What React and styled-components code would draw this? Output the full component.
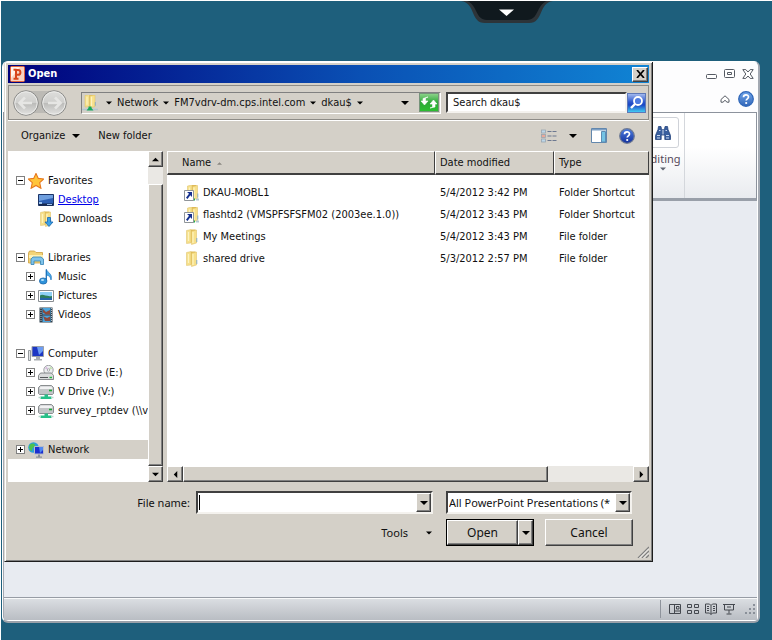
import { useId } from 'react';
import styled, { createGlobalStyle, css } from 'styled-components';

const face = '#d4d0c8';
const tahoma = "'DejaVu Sans Condensed', 'DejaVu Sans', sans-serif";
const segoe = "'Noto Sans', 'Open Sans', sans-serif";

const GlobalStyle = createGlobalStyle`
  * {
    box-sizing: border-box;
  }

  body {
    margin: 0;
    background: #1e5f7c;
    color: #111;
    font-family: ${tahoma};
    font-size: 11px;
    line-height: 14px;
  }

  button, input, select {
    font: inherit;
    color: inherit;
    margin: 0;
    padding: 0;
    border-radius: 0;
    outline: none;
  }

  svg {
    display: block;
    flex: none;
  }
`;

const raised = css`
  border: 1px solid;
  border-color: #fff #404040 #404040 #fff;
  box-shadow: inset -1px -1px 0 #808080;
  background: ${face};
`;

const sunken = css`
  border: 2px solid;
  border-color: #404040 #f4f2ee #f4f2ee #404040;
  background: #fff;
`;

const Desktop = styled.main`
  display: flex;
  flex-direction: column;
  min-height: 100vh;
  padding: 0 12px 17px 1px;
  border-top: 1px solid #fff;
  border-left: 1px solid #fff;
  background: #1e5f7c;
`;

const TopBar = styled.header`
  height: 60px;
  padding-left: 459px;
`;

const PlainButton = styled.button`
  display: flex;
  align-items: center;
  justify-content: center;
  flex: none;
  border: 0;
  background: none;
`;

const AppWindow = styled.section`
  position: relative;
  display: flex;
  flex-direction: column;
  flex: 1;
  border: 1px solid #fff;
  border-right: 2px solid #a3a9b2;
  border-bottom: 2px solid #9ba1aa;
  border-radius: 6px;
  background: #e8ebf1;
  box-shadow: inset 1px 0 0 #a5a9b2, inset -1px -1px 0 #fff;
  overflow: hidden;
`;

const AppTitle = styled.div`
  display: flex;
  justify-content: flex-end;
  align-items: center;
  gap: 7px;
  height: 24px;
  padding-right: 4px;
  background: #fdfdfe;
`;

const AppTabs = styled(AppTitle)`
  gap: 8px;
  height: 26px;
`;

const Ribbon = styled.div`
  display: flex;
  justify-content: flex-end;
  height: 89px;
  margin-right: 1px;
  padding-right: 71px;
  border: 1px solid #8d939d;
  border-bottom: 3px solid #999fa9;
  background: linear-gradient(#fff 40%, #e9ebef);
`;

const RibbonGroup = styled.div`
  display: flex;
  flex-direction: column;
  align-items: center;
  width: 44px;
  padding-top: 4px;
  border-right: 1px solid #d4d7dc;
  color: #55495a;
  font-family: ${segoe};
  font-size: 11px;
  line-height: 14px;
`;

const RibbonTile = styled.button`
  display: flex;
  align-items: center;
  justify-content: center;
  width: 32px;
  height: 31px;
  margin-bottom: 4px;
  border: 1px solid #cfd2d8;
  border-radius: 3px;
  background: #fff;
`;

const AppBody = styled.div`
  flex: 1;
`;

const StatusBar = styled.footer`
  display: flex;
  justify-content: flex-end;
  align-items: center;
  gap: 6px;
  height: 23px;
  margin: 0 1px 1px;
  padding-right: 1px;
  border-top: 1px solid #979ca5;
  box-shadow: inset 0 1px 0 #f8f9fa;
  background: linear-gradient(#dcdfe3, #b9bdc3);
`;

const StatusDivider = styled.span`
  width: 1px;
  height: 18px;
  margin-right: 2px;
  background: #8f949c;
`;

const StatusViews = styled.div`
  display: flex;
  gap: 6px;
  margin-right: 3px;
`;

const Dialog = styled.form`
  position: absolute;
  top: -1px;
  left: 1px;
  right: 105px;
  padding: 3px;
  border: 1px solid;
  border-color: #dedbd5 #1d1d1d #1d1d1d #dedbd5;
  box-shadow: inset 1px 1px 0 #fff, inset -1px -1px 0 #808080;
  background: ${face};
`;

const DialogTitle = styled.div`
  display: flex;
  align-items: center;
  gap: 3px;
  height: 18px;
  padding: 0 1px 0 2px;
  background: linear-gradient(90deg, #00007c, #0a50b4 55%, #1084d4);
  color: #fff;
`;

const TitleText = styled.h1`
  flex: 1;
  margin: 0;
  font-size: 11px;
  line-height: 14px;
`;

const CloseButton = styled.button`
  ${raised}
  display: flex;
  align-items: center;
  justify-content: center;
  width: 16px;
  height: 15px;
`;

const AddressRow = styled.div`
  display: flex;
  align-items: center;
  height: 35px;
  margin-top: 2px;
  padding: 0 2px 0 4px;
  border: 1px solid #8e8c87;
  box-shadow: 0 1px 0 #fff;
`;

const AddressBox = styled.nav`
  display: flex;
  align-items: center;
  flex: 1;
  height: 22px;
  margin: 0 5px 0 14px;
  padding: 0 1px 0 0;
  border: 1px solid;
  border-color: #808080 #fff #fff #808080;
`;

const Crumb = styled.button`
  display: flex;
  align-items: center;
  gap: 5px;
  padding: 0 0 0 5px;
  border: 0;
  background: none;
  white-space: nowrap;
`;

const FirstCrumb = styled(Crumb)`
  padding-left: 8px;
`;

const Spacer = styled.span`
  flex: ${props => (props.$width ? `0 0 ${props.$width}px` : 1)};
`;

const SearchInput = styled.input`
  ${sunken}
  width: 181px;
  height: 21px;
  padding: 0 5px;
`;

const Toolbar = styled.div`
  display: flex;
  align-items: center;
  height: 31px;
  padding: 0 14px 0 13px;
`;

const ToolButton = styled.button`
  display: flex;
  align-items: center;
  gap: 7px;
  margin-right: ${props => props.$gap}px;
  padding: 0;
  border: 0;
  background: none;
  white-space: nowrap;
`;

const Panes = styled.div`
  display: flex;
  gap: 4px;
  height: 331px;
`;

const TreePane = styled.div`
  display: flex;
  width: 155px;
  background: #fff;
`;

const Tree = styled.ul`
  flex: 1;
  min-width: 0;
  margin: 0;
  padding: 20px 0 0;
  list-style: none;
  overflow: hidden;
`;

const TreeGroup = styled.li`
  margin-bottom: 20px;
`;

const Branch = styled.ul`
  margin: 0;
  padding: 0;
  list-style: none;
`;

const TreeRow = styled.div`
  display: flex;
  align-items: center;
  gap: 3px;
  height: 19px;
  padding-left: ${props => (props.$child ? 18 : 8)}px;
  background: ${props => (props.$selected ? face : 'transparent')};
  white-space: nowrap;
`;

const TreeLink = styled.a`
  margin-left: 1px;
  color: ${props => (props.$active ? '#0000e8' : 'inherit')};
  text-decoration: ${props => (props.$active ? 'underline' : 'none')};
`;

const Toggle = styled.button`
  display: flex;
  flex: none;
  width: 9px;
  height: 9px;
  border: 1px solid #808080;
  background: #fff;
`;

const TogglePlace = styled.span`
  flex: none;
  width: 9px;
`;

const ScrollBar = styled.div`
  display: flex;
  flex: none;
  flex-direction: ${props => (props.$vertical ? 'column' : 'row')};
  ${props => (props.$vertical ? 'width: 15px;' : 'height: 16px;')}
  background: #eae8e4;
`;

const ScrollButton = styled.button`
  ${raised}
  display: flex;
  align-items: center;
  justify-content: center;
  flex: none;
  width: ${props => (props.$wide ? 16 : 15)}px;
  height: 16px;
`;

const ScrollThumb = styled.div`
  ${raised}
  flex: ${props => props.$size};
`;

const ScrollGap = styled.div`
  flex: ${props => props.$size};
`;

const ListPane = styled.div`
  display: flex;
  flex-direction: column;
  flex: 1;
  min-width: 0;
  background: #fff;
`;

const ListArea = styled.div`
  flex: 1;
`;

const FileTable = styled.table`
  width: 100%;
  border-collapse: separate;
  border-spacing: 0;
  table-layout: fixed;
`;

const HeadCell = styled.th`
  height: 24px;
  padding: 1px 0 0 ${props => props.$inset}px;
  border: 1px solid;
  border-color: #fff #404040 #404040 #fff;
  border-bottom-width: 2px;
  background: ${face};
  font-weight: normal;
  text-align: left;
`;

const HeadLabel = styled.span`
  display: flex;
  align-items: center;
  gap: 6px;
`;

const FileRows = styled.tbody`
  td {
    height: 22px;
    padding: 0 0 0 5px;
    white-space: nowrap;
  }

  &::before {
    content: '';
    display: table-row;
    height: 7px;
  }
`;

const FileName = styled.span`
  display: flex;
  align-items: center;
  gap: 3px;
  padding-left: 12px;
`;

const Footer = styled.div`
  display: grid;
  grid-template-columns: 1fr 237px 186px;
  column-gap: 13px;
  row-gap: 5px;
  align-items: center;
  padding: 9px 17px 8px 0;
  font-family: ${segoe};
  font-size: 11px;
  line-height: 16px;
`;

const FieldLabel = styled.label`
  margin-right: -7px;
  text-align: right;
`;

const Combo = styled.div`
  ${sunken}
  display: flex;
  height: 23px;
`;

const FileInput = styled.input`
  flex: 1;
  min-width: 0;
  padding: 0 3px;
  border: 0;
  background: linear-gradient(#000, #000) 1px 2px / 1px 15px no-repeat #fff;
`;

const TypeSelect = styled.select`
  flex: 1;
  min-width: 0;
  padding: 0 1px;
  border: 0;
  background: #fff;
  appearance: none;
`;

const Drop = styled.button`
  ${raised}
  display: flex;
  align-items: center;
  justify-content: center;
  flex: none;
  width: 15px;
`;

const ToolsCell = styled.div`
  display: flex;
  justify-content: flex-end;
  grid-column: 1 / 3;
`;

const Actions = styled.div`
  display: flex;
  justify-content: space-between;
  margin-right: -1px;
  font-size: 12px;
`;

const SplitButton = styled.div`
  display: flex;
  width: 88px;
  height: 27px;
  border: 1px solid #000;
`;

const PushButton = styled.button`
  ${raised}
  width: ${props => props.$width};
  height: ${props => props.$height};
`;

const GripCorner = styled.div`
  display: flex;
  justify-content: flex-end;
  height: 12px;
  margin-top: -8px;
`;

const Arrow = ({ size = 7, dir = 'down', color = '#000' }) => {
  const turn = { down: 0, left: 90, up: 180, right: 270 }[dir];
  return (
    <svg width={size} height={size} viewBox="0 0 8 8" aria-hidden="true">
      <path d="M0 2h8L4 6z" fill={color} transform={`rotate(${turn} 4 4)`} />
    </svg>
  );
};

const FolderShape = () => (
  <>
    <path d="M2.500 1.500L7 .5v13.500l-4.500.5z" fill="#f6e08c" stroke="#dcbf62" strokeWidth=".5" />
    <path d="M7 .5h4.500v13H7z" fill="#dfbb58" />
    <path d="M7.500 2l5-1v13l-5 1.500z" fill="#f7e08a" stroke="#dcbb5a" strokeWidth=".5" />
    <path d="M9 3v11M4.500 3v9" stroke="#fdf3c0" strokeWidth="1.200" />
    <path d="M12.800 9v4" stroke="#6fa2cf" strokeWidth=".8" />
  </>
);

const icons = {
  star: (
    <path
      d="M8 .4l2.300 5 5.500.6-4.100 3.700 1.200 5.600L8 12.500 3.100 15.300l1.200-5.600L.2 6l5.500-.6z"
      fill="#ffc53a"
      stroke="#e8791e"
      strokeWidth="1.100"
    />
  ),
  desktop: (
    <>
      <path d="M.5 2.500h15v11H.5z" fill="#2c5fb4" stroke="#1c3467" />
      <path d="M1 3h14v3L1 9z" fill="#6e9ede" />
      <path d="M1 11.500h14v2H1z" fill="#17284e" />
      <path d="M1 10h3v2H1zM9 12h5v1H9z" fill="#9cc3ee" />
    </>
  ),
  downloads: (
    <>
      <FolderShape />
      <path d="M9.500 6.500h3V11H15l-4 4.500L7 11h2.500z" fill="#3aa0e6" stroke="#1766ae" strokeWidth=".8" />
    </>
  ),
  libraries: (
    <>
      <path d="M.5 3l1-2h5L8 2.500h6.500V13H.5z" fill="#f3d477" stroke="#cda03f" strokeWidth=".8" />
      <path d="M1 5h14v3H1z" fill="#fdf0b4" />
      <path d="M3 14.500V9l2-2h8l2.500 2v5.500h-3V11H6v3.500z" fill="#7fc3ea" stroke="#3283b8" strokeWidth=".8" />
    </>
  ),
  music: (
    <>
      <path d="M8.500.5c.5 3 6.500 4 4.500 10.500-.3-3-2-4.500-4.500-5z" fill="#4aabea" stroke="#1d73bb" strokeWidth=".7" />
      <path d="M8.300.5v11.500" stroke="#1d73bb" strokeWidth="1.300" />
      <ellipse cx="5.200" cy="12" rx="3.800" ry="3.100" fill="#2f93da" stroke="#1a62a5" strokeWidth=".7" />
      <ellipse cx="4.500" cy="11" rx="1.600" ry="1" fill="#b6e2fb" />
    </>
  ),
  pictures: (
    <>
      <path d="M.5 2.500h15v11H.5z" fill="#fff" stroke="#8a8e92" />
      <path d="M2 4h12v8H2z" fill="#8fd0f5" />
      <path d="M2 7.500c3-2 6 1.500 12 .5v4H2z" fill="#2d7d5b" />
      <path d="M2 10c4-1 8 1 12-.5V12H2z" fill="#2664a8" />
    </>
  ),
  videos: (
    <>
      <path d="M1.500.5h13v15h-13z" fill="#31404d" />
      <path d="M4.500 1h8v6.500h-8zM4.500 8.500h8V15h-8z" fill="#4ba4dc" />
      <path d="M5 2l3 3 4-2v4.500H8l-3-2zM5 9l4 2 3-1.500v4.500H7z" fill="#8e4b3c" />
      <path d="M3 1v14M13.500 1v14" stroke="#b6c0c8" strokeDasharray="1 1" />
    </>
  ),
  computer: (
    <>
      <path d="M.5 4.500h2v10h-2z" fill="#e2e4e6" stroke="#7f8488" strokeWidth=".8" />
      <path d="M4 .5h11.500v10H4z" fill="#1d37c4" stroke="#9ba0a8" />
      <path d="M9 1h6v4l-4 4z" fill="#6c9cf4" />
      <path d="M8 11h4v2h2v1.500H6V13h2z" fill="#a9adb2" />
    </>
  ),
  cd: (
    <>
      <circle cx="10.500" cy="5" r="4.700" fill="#eceef0" stroke="#8a8e92" strokeWidth=".8" />
      <path d="M10.500 5l2-3.500 2 2z" fill="#c6e3b1" />
      <path d="M10.500 5L7 3.500 8.500 1.500z" fill="#d8b9dd" />
      <circle cx="10.500" cy="5" r="1.200" fill="#fff" stroke="#7d8184" strokeWidth=".6" />
      <path d="M2.500 8h11l2 2.500v4H.5v-4z" fill="#d9dbdc" stroke="#6d7173" strokeWidth=".8" />
      <path d="M2 12.500h8" stroke="#55595c" />
      <path d="M11.500 12.500h2.500" stroke="#23b43c" strokeWidth="1.400" />
    </>
  ),
  netdrive: (
    <>
      <path d="M2.500 1.500h11l2 2v6l-1 1h-13l-1-1v-6z" fill="#c2c5c7" stroke="#74787b" strokeWidth=".8" />
      <path d="M2.500 2.500h11l1 2.500h-13z" fill="#f1f2f3" />
      <path d="M11 6.500h3" stroke="#1ba634" strokeWidth="1.600" />
      <path d="M6.500 10.500h3.500v2h3.500v2.500h-11v-2.500h4z" fill="#27c088" />
      <path d="M.5 13.500H3M13 13.500h2.500" stroke="#b9d8cc" strokeWidth="1.500" />
    </>
  ),
  network: (
    <>
      <circle cx="5.500" cy="5.500" r="5.300" fill="#2aa1d8" />
      <path d="M2 2.500c3-2 5-1 5 1S4 5 4 8 1 7 1 5z" fill="#4dc24d" />
      <path d="M6.500 4.500h9v7.500h-9z" fill="#1c2fd0" stroke="#b7bcc8" />
      <path d="M11 5h4v3l-3 3z" fill="#4e86f0" />
      <path d="M10 12.500h2v2h2v1.200H8v-1.200h2z" fill="#8c919a" />
    </>
  ),
  folder: <FolderShape />,
  shortcut: (
    <>
      <g transform="translate(1 -.5)">
        <FolderShape />
      </g>
      <path d="M9 14.500h2" stroke="#15b04b" strokeWidth="2" />
      <path d="M12 14.500h3" stroke="#b3c7d5" strokeWidth="2" />
      <path d="M.5 5.500h9v10h-9z" fill="#fff" stroke="#8f9499" />
      <path d="M3 7h5v5L6.300 10.300 3.500 14 2 12.700l3-3.900z" fill="#15308f" />
    </>
  ),
  share: (
    <>
      <g transform="translate(.5 -1) scale(1 .9)">
        <FolderShape />
      </g>
      <path d="M0 14.500h16" stroke="#b4c6cf" strokeWidth="1.600" />
      <path d="M6.500 11.500h3v1.500l2 2.500h-7l2-2.500z" fill="#16a85c" />
    </>
  ),
};

const Icon = ({ name, size = 16 }) => (
  <svg width={size} height={size} viewBox="0 0 16 16" aria-hidden="true">
    {icons[name]}
  </svg>
);

const HelpIcon = ({ rim = '#2f66b8', from = '#6fa5ea', to = '#3266b8' }) => {
  const id = useId();
  return (
    <svg width="16" height="16" viewBox="0 0 16 16" aria-hidden="true">
      <linearGradient id={id} x2="0" y2="1">
        <stop stopColor={from} />
        <stop offset="1" stopColor={to} />
      </linearGradient>
      <circle cx="8" cy="8" r="7.300" fill={`url(#${id})`} stroke={rim} strokeWidth="1.200" />
      <path
        d="M5.500 6.300c0-3.200 5-3.200 5-.2 0 1.700-2.300 1.800-2.300 3.500"
        fill="none"
        stroke="#fff"
        strokeWidth="1.700"
      />
      <circle cx="8.200" cy="12" r="1.100" fill="#fff" />
    </svg>
  );
};

const PowerPointIcon = () => (
  <svg width="15" height="16" viewBox="0 0 15 16" aria-hidden="true">
    <rect x=".5" y=".5" width="14" height="15" rx="1" fill="#f8d3c2" stroke="#e2623a" />
    <path d="M1 1h9L1 12z" fill="#fff3ec" />
    <path
      d="M6 13V4h2a2.300 2.300 0 010 4.800H6M3.500 12.800h5M3.500 3.800h3"
      fill="none"
      stroke="#d6451b"
      strokeWidth="2"
    />
  </svg>
);

const NavArrows = () => (
  <svg width="54" height="28" viewBox="0 0 54 28" aria-hidden="true">
    <linearGradient id="navFace" x2="0" y2="1">
      <stop stopColor="#dededc" />
      <stop offset=".48" stopColor="#cfcfcd" />
      <stop offset=".52" stopColor="#bcbcba" />
      <stop offset="1" stopColor="#e4e4e2" />
    </linearGradient>
    <path d="M13 2h28v22H13z" fill="#bcbab5" />
    {[13, 41].map(x => (
      <g key={x}>
        <circle cx={x} cy="14" r="12.300" fill="url(#navFace)" stroke="#8b8b89" />
        <circle cx={x} cy="14" r="11.200" fill="none" stroke="#ebebe9" />
        <path
          d="M6 0H-6M-1-5.500L-6.500 0-1 5.500"
          transform={`translate(${x} 14) scale(${x === 13 ? 1 : -1} 1)`}
          fill="none"
          stroke="#e6e6e4"
          strokeWidth="2.600"
        />
      </g>
    ))}
  </svg>
);

const RefreshIcon = () => (
  <svg width="20" height="19" viewBox="0 0 20 19" aria-hidden="true">
    <linearGradient id="refreshFace" x2="0" y2="1">
      <stop stopColor="#8fd48c" />
      <stop offset=".5" stopColor="#2ea838" />
      <stop offset="1" stopColor="#2cc030" />
    </linearGradient>
    <rect x=".5" y=".5" width="19" height="18" fill="url(#refreshFace)" stroke="#76937a" />
    <path
      d="M9 4L6.500 5v3H9L5.500 12 2 8h2V5.500zM11 15l2.500-1v-3H11l3.500-4 3.500 4h-2v3z"
      fill="#fff"
      stroke="#fff"
      strokeWidth=".6"
    />
  </svg>
);

const SearchIcon = () => (
  <svg width="19" height="20" viewBox="0 0 19 20" aria-hidden="true">
    <linearGradient id="searchFace" x2="0" y2="1">
      <stop stopColor="#a9bff0" />
      <stop offset=".45" stopColor="#2a55cc" />
      <stop offset=".6" stopColor="#1a45c4" />
      <stop offset="1" stopColor="#46d4f6" />
    </linearGradient>
    <rect x=".5" y=".5" width="18" height="19" fill="url(#searchFace)" stroke="#5d78b8" />
    <circle cx="11" cy="8" r="4" fill="#4c7ae0" stroke="#fff" strokeWidth="1.800" />
    <path d="M8 11l-4 4" stroke="#fff" strokeWidth="2.400" />
  </svg>
);

const ViewIcon = () => (
  <svg width="16" height="14" viewBox="0 0 16 14" aria-hidden="true">
    {[1, 5.5, 10].map((y, i) => (
      <g key={y}>
        <rect x=".5" y={y} width="4" height="3" fill={i === 1 ? '#e8a99a' : '#bcd6e8'} stroke="#9aa5b0" strokeWidth=".8" />
        <path d={`M6.500 ${y + 1.5}h4M11.500 ${y + 1.5}h4`} stroke="#6c7890" strokeWidth="1.200" />
      </g>
    ))}
  </svg>
);

const PreviewIcon = () => (
  <svg width="16" height="15" viewBox="0 0 16 15" aria-hidden="true">
    <path d="M.5.5h15v14H.5z" fill="#fff" stroke="#6287ad" />
    <path d="M1 1h14v1.500H1z" fill="#7d9fc4" />
    <path d="M10.500 3.500h4V14h-4z" fill="#74c3e4" stroke="#5d8cb4" />
  </svg>
);

const BinocularsIcon = () => (
  <svg width="16" height="14" viewBox="0 0 16 14" aria-hidden="true">
    <path
      d="M3.500.5h2.500l.5 3h3l.5-3h2.500l.5 3 2.500 6v4H9.800V9H6.200v4.500H.5v-4l2.500-6z"
      fill="#3a5f9e"
      stroke="#24447e"
      strokeWidth=".8"
    />
    <path d="M2 9.500h3M11 9.500h3M4 4.500h1.500M10.500 4.500H12M2 12h3M11 12h3" stroke="#c7d8f0" />
    <path d="M8 3.500v5" stroke="#fff" strokeWidth=".8" />
  </svg>
);

const Grip = ({ color }) => (
  <svg width="12" height="12" viewBox="0 0 12 12" aria-hidden="true">
    <path d="M1 12L12 1M5 12l7-7M9 12l3-3" stroke={color} strokeWidth="1.300" />
    <path d="M2.500 12L12 2.500M6.500 12L12 6.500" stroke="#fff" strokeWidth=".8" />
  </svg>
);

const PulldownTab = () => (
  <svg width="92" height="23" viewBox="0 0 92 23" aria-hidden="true">
    <path d="M0 0h92c-15 2-9 22-24 22H24C9 22 15 2 0 0z" fill="#2d3439" />
    <path d="M6 0h80c-11 4-8 19-20 19H26C14 19 17 4 6 0z" fill="#10191e" />
    <path d="M38 8.500h15L45.500 15z" fill="#fff" />
  </svg>
);

const statusIcons = [
  ['Normal', <path key="n" d="M.5 1.500h11v9H.5zM5.500 1.500v9M7.500 3.500h2.500v2.500H7.500zM5.500 8h6" />],
  ['Slide sorter', <path key="s" d="M.5 1.500h4v3h-4zM7.500 1.500h4v3h-4zM.5 7.500h4v3h-4zM7.500 7.500h4v3h-4z" />],
  ['Reading view', <path key="r" d="M6 2.500L4.500 1H.5v9h4L6 11.500 7.500 10h4V1h-4zM6 2.500v9M2 3.500h2M2 5.500h2M2 7.500h2M8 3.500h2M8 5.500h2M8 7.500h2" />],
  ['Slide show', <path key="w" d="M0 1.500h12M1.500 1.500v5.500h9V1.500M4 4h4M6 7v3.500M3.500 11h5" />],
];

const tree = [
  {
    label: 'Favorites',
    icon: 'star',
    open: true,
    children: [
      { label: 'Desktop', icon: 'desktop', active: true, leaf: true },
      { label: 'Downloads', icon: 'downloads', leaf: true },
    ],
  },
  {
    label: 'Libraries',
    icon: 'libraries',
    open: true,
    children: [
      { label: 'Music', icon: 'music' },
      { label: 'Pictures', icon: 'pictures' },
      { label: 'Videos', icon: 'videos' },
    ],
  },
  {
    label: 'Computer',
    icon: 'computer',
    open: true,
    children: [
      { label: 'CD Drive (E:)', icon: 'cd' },
      { label: 'V Drive (V:)', icon: 'netdrive' },
      { label: 'survey_rptdev (\\\\v', icon: 'netdrive' },
    ],
  },
  { label: 'Network', icon: 'network', selected: true, children: [] },
];

const files = [
  { name: 'DKAU-MOBL1', icon: 'shortcut', date: '5/4/2012 3:42 PM', type: 'Folder Shortcut' },
  { name: 'flashtd2 (VMSPFSFSFM02 (2003ee.1.0))', icon: 'shortcut', date: '5/4/2012 3:43 PM', type: 'Folder Shortcut' },
  { name: 'My Meetings', icon: 'folder', date: '5/4/2012 3:43 PM', type: 'File folder' },
  { name: 'shared drive', icon: 'folder', date: '5/3/2012 2:57 PM', type: 'File folder' },
];

const TreeItem = ({ item, child }) => (
  <TreeRow $child={child} $selected={item.selected}>
    {item.leaf ? (
      <TogglePlace />
    ) : (
      <Toggle type="button" aria-label={`Toggle ${item.label}`}>
        <svg width="7" height="7" viewBox="0 0 7 7">
          <path d={item.open ? 'M1 3.500h5' : 'M1 3.500h5M3.500 1v5'} stroke="#000" />
        </svg>
      </Toggle>
    )}
    <Icon name={item.icon} />
    <TreeLink href="#" $active={item.active}>
      {item.label}
    </TreeLink>
  </TreeRow>
);

const OpenDialog = () => (
  <Dialog onSubmit={e => e.preventDefault()}>
    <DialogTitle>
      <PowerPointIcon />
      <TitleText>Open</TitleText>
      <CloseButton type="button" aria-label="Close">
        <svg width="9" height="8" viewBox="0 0 9 8">
          <path d="M1 0l7 8M8 0L1 8" stroke="#000" strokeWidth="1.700" />
        </svg>
      </CloseButton>
    </DialogTitle>

    <AddressRow>
      <PlainButton type="button" aria-label="Back and forward">
        <NavArrows />
      </PlainButton>
      <AddressBox aria-label="Location">
        <Icon name="share" />
        <FirstCrumb type="button" aria-label="Locations">
          <Arrow size={6} />
        </FirstCrumb>
        {['Network', 'FM7vdrv-dm.cps.intel.com', 'dkau$'].map(part => (
          <Crumb type="button" key={part}>
            {part}
            <Arrow size={6} />
          </Crumb>
        ))}
        <Spacer />
        <PlainButton type="button" aria-label="Previous locations">
          <Arrow size={8} />
        </PlainButton>
        <Spacer $width={10} />
        <PlainButton type="button" aria-label="Refresh">
          <RefreshIcon />
        </PlainButton>
      </AddressBox>
      <SearchInput aria-label="Search" defaultValue="Search dkau$" />
      <PlainButton type="button" aria-label="Search">
        <SearchIcon />
      </PlainButton>
    </AddressRow>

    <Toolbar>
      <ToolButton type="button" $gap={18}>
        Organize
        <Arrow size={8} />
      </ToolButton>
      <ToolButton type="button" $gap={0}>
        New folder
      </ToolButton>
      <Spacer />
      <ToolButton type="button" aria-label="Change view" $gap={12}>
        <ViewIcon />
      </ToolButton>
      <ToolButton type="button" aria-label="More views" $gap={14}>
        <Arrow size={8} />
      </ToolButton>
      <ToolButton type="button" aria-label="Preview pane" $gap={12}>
        <PreviewIcon />
      </ToolButton>
      <ToolButton type="button" aria-label="Help" $gap={0}>
        <HelpIcon rim="#6f7a92" from="#4d7de0" to="#12309c" />
      </ToolButton>
    </Toolbar>

    <Panes>
      <TreePane>
        <Tree>
          {tree.map(group => (
            <TreeGroup key={group.label}>
              <TreeItem item={group} />
              <Branch>
                {group.children.map(item => (
                  <li key={item.label}>
                    <TreeItem item={item} child />
                  </li>
                ))}
              </Branch>
            </TreeGroup>
          ))}
        </Tree>
        <ScrollBar $vertical>
          <ScrollButton type="button" aria-label="Scroll up">
            <Arrow dir="up" />
          </ScrollButton>
          <ScrollGap $size={17} />
          <ScrollThumb $size={281} />
          <ScrollButton type="button" aria-label="Scroll down">
            <Arrow />
          </ScrollButton>
        </ScrollBar>
      </TreePane>

      <ListPane>
        <ListArea>
          <FileTable>
            <colgroup>
              <col />
              <col width="119" />
              <col width="95" />
            </colgroup>
            <thead>
              <tr>
                <HeadCell $inset={14}>
                  <HeadLabel>
                    Name
                    <Arrow size={5} dir="up" color="#8a8780" />
                  </HeadLabel>
                </HeadCell>
                <HeadCell $inset={4}>Date modified</HeadCell>
                <HeadCell $inset={4}>Type</HeadCell>
              </tr>
            </thead>
            <FileRows>
              {files.map(file => (
                <tr key={file.name}>
                  <td>
                    <FileName>
                      <Icon name={file.icon} />
                      {file.name}
                    </FileName>
                  </td>
                  <td>{file.date}</td>
                  <td>{file.type}</td>
                </tr>
              ))}
            </FileRows>
          </FileTable>
        </ListArea>
        <ScrollBar>
          <ScrollButton type="button" aria-label="Scroll left" $wide>
            <Arrow dir="left" />
          </ScrollButton>
          <ScrollThumb $size={366} />
          <ScrollGap $size={86} />
          <ScrollButton type="button" aria-label="Scroll right" $wide>
            <Arrow dir="right" />
          </ScrollButton>
        </ScrollBar>
      </ListPane>
    </Panes>

    <Footer>
      <FieldLabel htmlFor="filename">File name:</FieldLabel>
      <Combo>
        <FileInput id="filename" />
        <Drop type="button" aria-label="Recent files">
          <Arrow size={8} />
        </Drop>
      </Combo>
      <Combo>
        <TypeSelect aria-label="File type">
          <option>All PowerPoint Presentations (*</option>
        </TypeSelect>
        <Drop type="button" aria-label="Show file types">
          <Arrow size={8} />
        </Drop>
      </Combo>
      <ToolsCell>
        <ToolButton type="button" $gap={1}>
          Tools
          <Spacer $width={4} />
          <Arrow size={6} />
        </ToolButton>
      </ToolsCell>
      <Actions>
        <SplitButton>
          <PushButton type="submit" $width="72px" $height="25px">
            Open
          </PushButton>
          <Drop type="button" aria-label="Open options">
            <Arrow size={8} />
          </Drop>
        </SplitButton>
        <PushButton type="button" $width="88px" $height="27px">
          Cancel
        </PushButton>
      </Actions>
    </Footer>
    <GripCorner>
      <Grip color="#808080" />
    </GripCorner>
  </Dialog>
);

const App = () => {
  return (
    <>
      <GlobalStyle />
      <Desktop>
        <TopBar>
          <PlainButton type="button" aria-label="Show toolbar">
            <PulldownTab />
          </PlainButton>
        </TopBar>
        <AppWindow>
          <AppTitle>
            <PlainButton type="button" aria-label="Minimize">
              <svg width="11" height="12" viewBox="0 0 11 12">
                <rect x=".5" y="6.500" width="10" height="4" rx="1" fill="#fff" stroke="#555a63" />
              </svg>
            </PlainButton>
            <PlainButton type="button" aria-label="Restore">
              <svg width="11" height="10" viewBox="0 0 11 10">
                <rect x=".5" y=".5" width="10" height="8" rx="1" fill="#fff" stroke="#555a63" />
                <path d="M3.500 3.500h4v2h-4z" fill="none" stroke="#555a63" />
              </svg>
            </PlainButton>
            <PlainButton type="button" aria-label="Close window">
              <svg width="12" height="10" viewBox="0 0 12 10">
                <path
                  d="M.8.6h3L6 3 8.200.6h3L8.200 5l3 4.400h-3L6 7 3.800 9.400h-3L3.800 5z"
                  fill="#fff"
                  stroke="#555a63"
                />
              </svg>
            </PlainButton>
          </AppTitle>
          <AppTabs>
            <PlainButton type="button" aria-label="Minimize the ribbon">
              <svg width="10" height="8" viewBox="0 0 10 8">
                <path d="M5 .8l4 3.700v2.700H7L5 5.300 3 7.200H1V4.500z" fill="#fff" stroke="#555a63" />
              </svg>
            </PlainButton>
            <PlainButton type="button" aria-label="PowerPoint help">
              <HelpIcon />
            </PlainButton>
          </AppTabs>
          <Ribbon>
            <RibbonGroup>
              <RibbonTile type="button" aria-label="Find">
                <BinocularsIcon />
              </RibbonTile>
              Editing
              <Arrow size={6} color="#5f6570" />
            </RibbonGroup>
          </Ribbon>
          <AppBody />
          <StatusBar>
            <StatusDivider />
            <StatusViews>
              {statusIcons.map(([label, shape]) => (
                <PlainButton type="button" key={label} aria-label={label}>
                  <svg width="12" height="12" viewBox="0 0 12 12" fill="none" stroke="#44484f">
                    {shape}
                  </svg>
                </PlainButton>
              ))}
            </StatusViews>
            <svg width="12" height="12" viewBox="0 0 12 12" aria-hidden="true">
              <path d="M9 2h2M9 6h2M5 6h2M9 10h2M5 10h2M1 10h2" stroke="#8a9099" strokeWidth="2" />
            </svg>
          </StatusBar>
          <OpenDialog />
        </AppWindow>
      </Desktop>
    </>
  );
};

export default App;
